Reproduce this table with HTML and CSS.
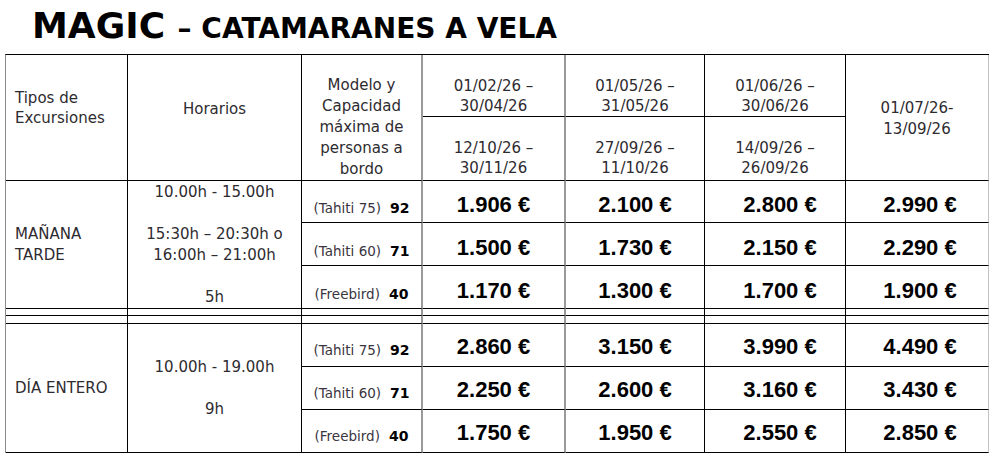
FILE: index.html
```html
<!DOCTYPE html>
<html lang="es">
<head>
<meta charset="utf-8">
<title>MAGIC – Catamaranes a vela</title>
<link rel="stylesheet" href="styles.css">
</head>
<body>
<h1 class="title"><span class="big">MAGIC</span> <span class="sub">– CATAMARANES A VELA</span></h1>
<table class="rates">
  <colgroup>
    <col class="c1"><col class="c2"><col class="c3"><col class="c4"><col class="c5"><col class="c6"><col class="c7">
  </colgroup>
  <tr class="hr1">
    <td rowspan="2" class="tipos">Tipos de<br>Excursiones</td>
    <td rowspan="2" class="hor">Horarios</td>
    <td rowspan="2" class="modelo g">Modelo y<br>Capacidad<br>máxima de<br>personas a<br>bordo</td>
    <td class="date up g">01/02/26 –<br>30/04/26</td>
    <td class="date up">01/05/26 –<br>31/05/26</td>
    <td class="date up">01/06/26 –<br>30/06/26</td>
    <td rowspan="2" class="date high last">01/07/26-<br>13/09/26</td>
  </tr>
  <tr class="hr2">
    <td class="date low g">12/10/26 –<br>30/11/26</td>
    <td class="date low">27/09/26 –<br>11/10/26</td>
    <td class="date low">14/09/26 –<br>26/09/26</td>
  </tr>

  <tr class="r up1">
    <td rowspan="3" class="tipo">MAÑANA<br>TARDE</td>
    <td rowspan="3" class="horas">10.00h - 15.00h<br><br>15:30h – 20:30h o<br>16:00h – 21:00h<br><br>5h</td>
    <td class="model g"><span class="mname">(Tahiti 75)</span><b class="cap">92</b></td>
    <td class="price g">1.906 €</td>
    <td class="price">2.100 €</td>
    <td class="price p6">2.800 €</td>
    <td class="price p7 last">2.990 €</td>
  </tr>
  <tr class="r up2">
    <td class="model g"><span class="mname">(Tahiti 60)</span><b class="cap">71</b></td>
    <td class="price g">1.500 €</td>
    <td class="price">1.730 €</td>
    <td class="price p6">2.150 €</td>
    <td class="price p7 last">2.290 €</td>
  </tr>
  <tr class="r up2">
    <td class="model g"><span class="mname">(Freebird)</span><b class="cap">40</b></td>
    <td class="price g">1.170 €</td>
    <td class="price">1.300 €</td>
    <td class="price p6">1.700 €</td>
    <td class="price p7 last">1.900 €</td>
  </tr>

  <tr class="sp1">
    <td></td><td></td><td class="g"></td><td class="g"></td><td></td><td></td><td class="last"></td>
  </tr>
  <tr class="sp2">
    <td></td><td></td><td class="g"></td><td class="g"></td><td></td><td></td><td class="last"></td>
  </tr>

  <tr class="r low1">
    <td rowspan="3" class="tipo">DÍA ENTERO</td>
    <td rowspan="3" class="horas">10.00h - 19.00h<br><br>9h</td>
    <td class="model g"><span class="mname">(Tahiti 75)</span><b class="cap">92</b></td>
    <td class="price g">2.860 €</td>
    <td class="price">3.150 €</td>
    <td class="price p6">3.990 €</td>
    <td class="price p7 last">4.490 €</td>
  </tr>
  <tr class="r low1">
    <td class="model g"><span class="mname">(Tahiti 60)</span><b class="cap">71</b></td>
    <td class="price g">2.250 €</td>
    <td class="price">2.600 €</td>
    <td class="price p6">3.160 €</td>
    <td class="price p7 last">3.430 €</td>
  </tr>
  <tr class="r low1">
    <td class="model g"><span class="mname">(Freebird)</span><b class="cap">40</b></td>
    <td class="price g">1.750 €</td>
    <td class="price">1.950 €</td>
    <td class="price p6">2.550 €</td>
    <td class="price p7 last">2.850 €</td>
  </tr>
</table>
</body>
</html>
```

FILE: styles.css
```css
body {
  margin: 0;
  background: #ffffff;
  font-family: "DejaVu Sans", "Noto Sans", sans-serif;
  font-size: 15px;
  line-height: 21px;
  color: #2e2b30;
}

.title {
  box-sizing: border-box;
  margin: 0;
  height: 54px;
  padding: 3px 0 0 32px;
  font-size: 36px;
  line-height: 46px;
  font-weight: bold;
  color: #000;
  white-space: nowrap;
}

.title .sub {
  font-size: 28px;
  line-height: 1;
}

.rates {
  margin-left: 5px;
  border-collapse: separate;
  border-spacing: 0;
  table-layout: fixed;
  width: 984px;
  border-top: 1px solid #000;
  border-left: 1px solid #8c8c8c;
}

.c1 { width: 122px; }
.c2 { width: 174px; }
.c3 { width: 121px; }
.c4 { width: 143px; }
.c5 { width: 139px; }
.c6 { width: 141px; }
.c7 { width: 143px; }

.rates td {
  box-sizing: border-box;
  padding: 0;
  border-right: 1px solid #000;
  border-bottom: 1px solid #000;
  text-align: center;
  vertical-align: middle;
}

.rates td.g {
  border-right: 2px solid #9a9a9a;
}

.rates td.last {
  border-right: 1px solid #c4c4c4;
}

.hr1 { height: 62px; }
.hr2 { height: 64px; }
.up1 { height: 42px; }
.up2 { height: 43px; }
.sp1 { height: 7px; }
.sp2 { height: 8px; }
.low1 { height: 43px; }

.tipos {
  vertical-align: top !important;
  text-align: left !important;
  padding: 33px 0 0 9px !important;
  line-height: 20px;
}

.hor {
  vertical-align: top !important;
  padding-top: 44px !important;
}

.modelo {
  vertical-align: bottom !important;
  line-height: 21px;
}

.date.up,
.date.low {
  vertical-align: bottom;
  line-height: 20px;
}

.date.low {
  padding-bottom: 2px !important;
}

.date.high {
  vertical-align: top;
  padding-top: 43px !important;
}

.tipo {
  text-align: left !important;
  padding-left: 9px !important;
}

.horas {
  line-height: 21px;
}

.model {
  vertical-align: bottom !important;
  font-size: 13.5px;
  line-height: 20px;
  padding-bottom: 4px !important;
  white-space: nowrap;
}

.mname {
  color: #3a3540;
}

.cap {
  font-size: 14px;
  font-weight: bold;
  color: #000;
  margin-left: 9px;
}

.price {
  vertical-align: bottom !important;
  font-family: "Liberation Sans", Arial, sans-serif;
  font-weight: bold;
  font-size: 22px;
  line-height: 26px;
  color: #000;
  padding-bottom: 4px !important;
  white-space: nowrap;
}

.low1 .model,
.low1 .price {
  padding-bottom: 6px !important;
}

.p6 { padding-left: 10px !important; }
.p7 { padding-left: 6px !important; }
```
